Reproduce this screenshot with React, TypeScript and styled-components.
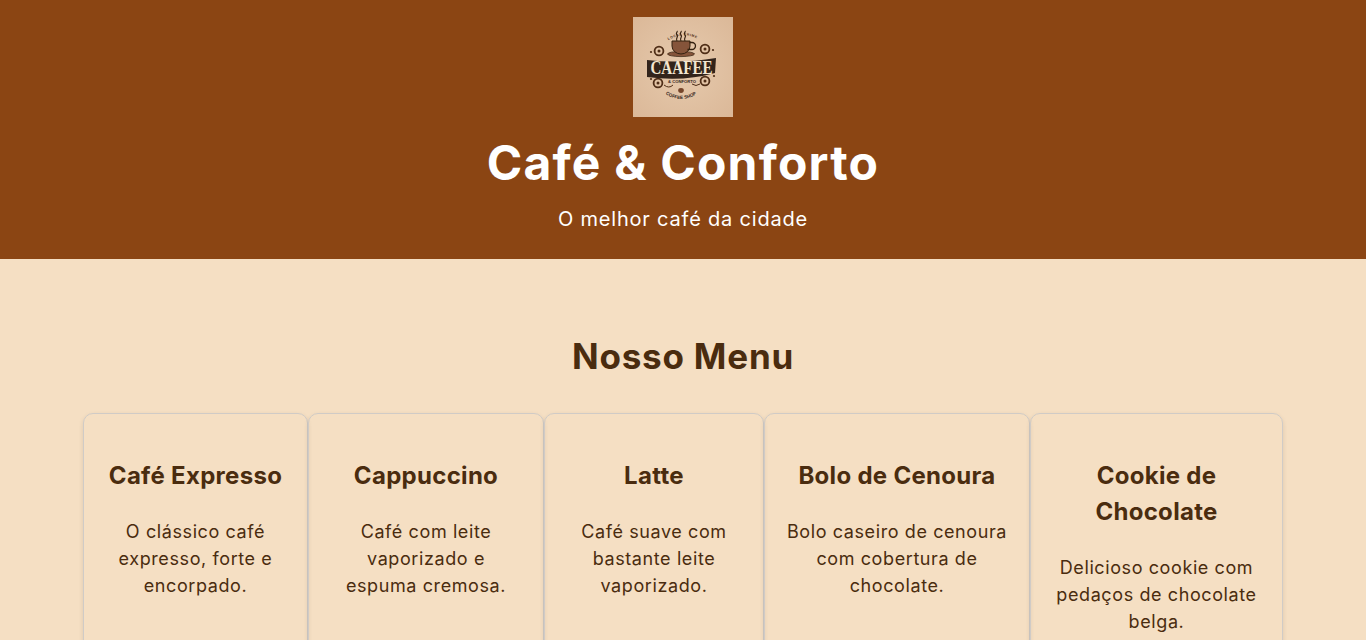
import React from 'react';
import styled, { createGlobalStyle } from 'styled-components';

const GlobalStyle = createGlobalStyle`
  * { box-sizing: border-box; }
  html, body { margin: 0; padding: 0; }
  body {
    background: #f5dfc3;
    color: #4a2c0f;
    font-family: 'Inter', 'Noto Sans', sans-serif;
    line-height: 1.5;
  }
`;

const Header = styled.header`
  height: 259px;
  padding-top: 17px;
  background: #8b4513;
  color: #fff;
  text-align: center;
`;

const LogoFrame = styled.svg`
  display: block;
  width: 100px;
  height: 100px;
  margin: 0 auto;
`;

const Title = styled.h1`
  margin: 10px 0 0;
  font-size: 48px;
  line-height: 72px;
  font-weight: 700;
  letter-spacing: 1.2px;
`;

const Tagline = styled.p`
  margin: 6px 0 0;
  font-size: 20px;
  line-height: 29px;
  letter-spacing: 0.8px;
`;

const Main = styled.main`
  width: 1200px;
  margin: 0 auto;
  padding-top: 70px;
`;

const SectionTitle = styled.h2`
  margin: 0 0 30px;
  font-size: 35px;
  line-height: 54px;
  font-weight: 700;
  letter-spacing: 0.8px;
  text-align: center;
`;

const MenuRow = styled.div`
  display: grid;
  grid-template-columns: 225px 236px 220px 266px 253px;
`;

const Card = styled.article`
  padding: 44px 20px 20px;
  min-height: 300px;
  border: 1px solid #d0cbc6;
  border-radius: 10px;
  box-shadow: 0 2px 5px rgba(0, 0, 0, 0.1);
  text-align: center;
`;

const CardTitle = styled.h3`
  margin: 0 0 24px;
  font-size: 24px;
  line-height: 36px;
  font-weight: 700;
  letter-spacing: 0.3px;
`;

const CardText = styled.p`
  margin: 0;
  font-size: 18px;
  line-height: 27px;
  letter-spacing: 0.6px;
`;

const items = [
  { name: 'Café Expresso', text: 'O clássico café expresso, forte e encorpado.' },
  { name: 'Cappuccino', text: 'Café com leite vaporizado e espuma cremosa.' },
  { name: 'Latte', text: 'Café suave com bastante leite vaporizado.' },
  { name: 'Bolo de Cenoura', text: 'Bolo caseiro de cenoura com cobertura de chocolate.' },
  { name: 'Cookie de Chocolate', text: 'Delicioso cookie com pedaços de chocolate belga.' },
];

const Swirl = ({ x, y }: { x: number; y: number }) => (
  <g>
    <circle cx={x} cy={y} r="4.4" fill="none" stroke="#4f2e17" strokeWidth="1.8" />
    <circle cx={x} cy={y} r="1.5" fill="#4f2e17" />
  </g>
);

const Logo = () => (
  <LogoFrame viewBox="0 0 100 100" aria-label="Logo">
    <defs>
      <radialGradient id="paper" cx="50%" cy="50%" r="70%">
        <stop offset="0" stopColor="#e6caad" />
        <stop offset="1" stopColor="#dbb898" />
      </radialGradient>
      <path id="topArc" d="M26 30 Q50 8 74 28" />
      <path id="bottomArc" d="M26 72 Q48 92 70 72" />
    </defs>
    <rect width="100" height="100" fill="url(#paper)" />
    {/* cup and steam */}
    <path d="M44 24c-2-3 2-4 0-6s1-3 0-4M48 24c-2-3 2-4 0-6s1-3 0-4M52 24c-2-3 2-4 0-6s1-3 0-4" fill="none" stroke="#33200f" strokeWidth="1.2" />
    <ellipse cx="48" cy="37" rx="13.500" ry="2.600" fill="#85543a" stroke="#33200f" strokeWidth="0.7" />
    <path d="M39 24h18v5a9 8 0 0 1-18 0z" fill="#85543a" stroke="#33200f" strokeWidth="1" />
    <path d="M56.500 25.500h2.500a3.500 3.500 0 0 1 0 7H54.500" fill="none" stroke="#33200f" strokeWidth="1.300" />
    <Swirl x={26} y={34} />
    <Swirl x={72} y={32} />
    <Swirl x={25} y={66} />
    <Swirl x={72} y={64} />
    <circle cx="80" cy="33" r="1.100" fill="#4f2e17" />
    <circle cx="18" cy="35" r="1.100" fill="#4f2e17" />
    <circle cx="81" cy="59" r="1.100" fill="#4f2e17" />
    <circle cx="18" cy="62" r="1.100" fill="#4f2e17" />
    <path d="M31 68q5 4 9 0M67 67q-4 3-8 0" fill="none" stroke="#4f2e17" strokeWidth="1" />
    <ellipse cx="48" cy="73.500" rx="2.800" ry="2.400" fill="#75452a" />
    {/* banner */}
    <path d="M14 43 Q48 47 83 41 L82 56 Q50 65 14 60z" fill="#33241b" />
    <text transform="translate(48.500 57) scale(0.84 1.1)" textAnchor="middle" fontFamily="'Liberation Serif', serif" fontSize="18" fontWeight="700" fill="#f3e6d0">CAAFEE</text>
    <text x="49" y="65.500" textAnchor="middle" fontFamily="'Liberation Sans', sans-serif" fontSize="4.200" fontWeight="700" fill="#33241b">&amp; CONFORTO</text>
    <text fontFamily="'Liberation Sans', sans-serif" fontSize="4.600" fontWeight="700" fill="#33241b">
      <textPath href="#bottomArc" startOffset="50%" textAnchor="middle">COFFEE SHOP</textPath>
    </text>
    <text fontFamily="'Liberation Sans', sans-serif" fontSize="3.400" fontWeight="700" letterSpacing="0.6" fill="#4f2e17">
      <textPath href="#topArc" startOffset="50%" textAnchor="middle">LOCAL         CRIME</textPath>
    </text>
  </LogoFrame>
);

export default function App() {
  return (
    <>
      <GlobalStyle />
      <Header>
        <Logo />
        <Title>Café &amp; Conforto</Title>
        <Tagline>O melhor café da cidade</Tagline>
      </Header>
      <Main>
        <SectionTitle>Nosso Menu</SectionTitle>
        <MenuRow>
          {items.map((item) => (
            <Card key={item.name}>
              <CardTitle>{item.name}</CardTitle>
              <CardText>{item.text}</CardText>
            </Card>
          ))}
        </MenuRow>
      </Main>
    </>
  );
}
